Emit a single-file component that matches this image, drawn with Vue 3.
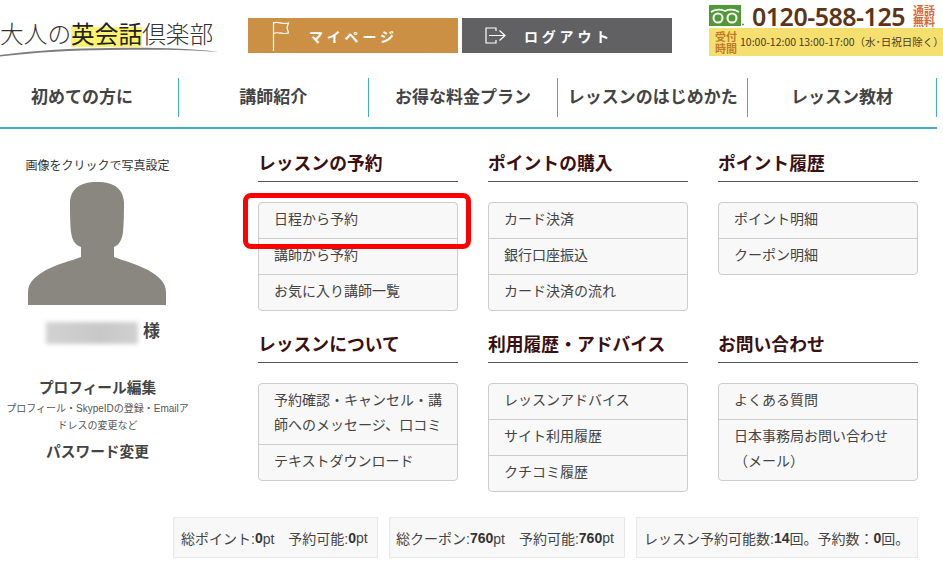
<template>
  <div class="page">
    <!-- header -->
    <header class="top">
      <div class="logo">
        <div class="logo-text">大人の<span class="mark">英会話</span>倶楽部</div>
        <svg class="brush" viewBox="0 0 218 12" width="218" height="12">
          <path d="M0 10 C40 5 70 3.500 110 3 C150 2.500 190 3 218 7 C190 4.500 150 4.500 110 5 C70 5.500 40 7 0 11.500 Z" fill="#7d7d7d" />
        </svg>
      </div>
      <a class="btn btn-my">
        <svg class="btn-icon" width="18" height="32" viewBox="0 0 18 32">
          <path d="M1.500 31 V2 M1.500 3 C6 0.500 10 5 16.500 3 L15 7.500 L16.500 13 C10 15 6 11 1.500 13.500" fill="none" stroke="#fff" stroke-width="1.200" />
        </svg>
        <span>マイページ</span>
      </a>
      <a class="btn btn-out">
        <svg class="btn-icon" width="21" height="17" viewBox="0 0 21 17">
          <path d="M11 4 V1 H1 V16 H11 V13 M4 8.500 H19.500 M14.500 3.500 L20 8.500 L14.500 13.500" fill="none" stroke="#fff" stroke-width="1.200" />
        </svg>
        <span>ログアウト</span>
      </a>
      <div class="tel">
        <div class="tel-row">
          <svg class="fd" width="36" height="21" viewBox="0 0 36 21">
            <rect width="32" height="21" fill="#4f9a35" />
            <circle cx="9" cy="13" r="4.500" fill="none" stroke="#fff" stroke-width="2" />
            <circle cx="23" cy="13" r="4.500" fill="none" stroke="#fff" stroke-width="2" />
            <path d="M2 7 Q9 3 16 6 Q23 3 30 7" fill="none" stroke="#fff" stroke-width="1.800" />
            <circle cx="34" cy="19.500" r="1" fill="#777" />
          </svg>
          <span class="tel-num">0120-588-125</span>
          <span class="tel-free">通話<br />無料</span>
        </div>
        <div class="hours">
          <span class="hours-label">受付<br />時間</span>
          <span class="hours-text">10:00-12:00 13:00-17:00（水･日祝日除く）</span>
        </div>
      </div>
    </header>

    <!-- global nav -->
    <nav class="gnav">
      <a v-for="item in navItems" :key="item" class="gnav-item">{{ item }}</a>
    </nav>

    <main class="content">
      <!-- profile column -->
      <aside class="side">
        <p class="photo-note">画像をクリックで写真設定</p>
        <svg class="avatar" width="138" height="123" viewBox="0 0 138 123">
          <path d="M0 123 V110 C0 100 8 94 18 88 C30 82 42 79 53 75 V65 C47 63 44 58 43 50 C42 40 42 28 42 20 C43 8 50 0 69 0 C88 0 95 8 96 20 C96 28 96 40 95 50 C94 58 91 63 86 65 V75 C97 79 108 82 120 88 C130 94 138 100 138 110 V123 Z" fill="#898780" />
        </svg>
        <div class="name"><span class="name-blur"></span><span class="name-sama">様</span></div>
        <a class="side-link side-first">プロフィール編集</a>
        <p class="side-sub">プロフィール・SkypeIDの登録・Emailアドレスの変更など</p>
        <a class="side-link">パスワード変更</a>
      </aside>

      <div class="body">
        <section class="menus">
          <div v-for="group in groups" :key="group.title" class="menu">
            <h2>{{ group.title }}</h2>
            <ul>
              <li v-for="link in group.links" :key="link">{{ link }}</li>
            </ul>
          </div>
          <!-- red annotation -->
          <div class="annot"></div>
        </section>

        <section class="stats">
          <div class="stat">総ポイント:<b>0</b>pt　予約可能:<b>0</b>pt</div>
          <div class="stat">総クーポン:<b>760</b>pt　予約可能:<b>760</b>pt</div>
          <div class="stat">レッスン予約可能数:<b>14</b>回。予約数：<b>0</b>回。</div>
        </section>
      </div>
    </main>
  </div>
</template>

<script setup>
const navItems = ['初めての方に', '講師紹介', 'お得な料金プラン', 'レッスンのはじめかた', 'レッスン教材']

const groups = [
  { title: 'レッスンの予約', links: ['日程から予約', '講師から予約', 'お気に入り講師一覧'] },
  { title: 'ポイントの購入', links: ['カード決済', '銀行口座振込', 'カード決済の流れ'] },
  { title: 'ポイント履歴', links: ['ポイント明細', 'クーポン明細'] },
  { title: 'レッスンについて', links: ['予約確認・キャンセル・講師へのメッセージ、口コミ', 'テキストダウンロード'] },
  { title: '利用履歴・アドバイス', links: ['レッスンアドバイス', 'サイト利用履歴', 'クチコミ履歴'] },
  { title: 'お問い合わせ', links: ['よくある質問', '日本事務局お問い合わせ（メール）'] },
]
</script>

<style>
html, body { margin: 0; background: #fff; overflow: hidden; }
</style>

<style scoped>
.page { width: 943px; height: 567px; overflow: hidden; font-family: "Liberation Sans", "Noto Sans CJK JP", sans-serif; color: #444; position: relative; }
.top { height: 78px; display: flex; align-items: flex-start; }
.logo { width: 248px; padding-top: 18px; flex-shrink: 0; }
.logo-text { font-family: "Noto Sans CJK JP", sans-serif; font-weight: 300; font-size: 23.700px; line-height: 30px; color: #333; white-space: nowrap; }
.mark { font-weight: 400; color: #222; background: linear-gradient(180deg, transparent 32%, #fbf36a 32%, #fbf36a 91%, transparent 91%); }
.brush { display: block; margin-top: -3px; }
.btn { width: 210px; height: 35px; margin-top: 18px; display: flex; align-items: center; color: #fff; font-size: 14px; font-weight: 700; letter-spacing: 3.800px; font-family: "Noto Sans CJK JP", sans-serif; }
.btn-my { background: #cb9044; padding-left: 24px; box-sizing: border-box; }
.btn-my .btn-icon { margin-right: 19px; }
.btn-out { background: #616163; margin-left: 4px; padding-left: 23px; box-sizing: border-box; }
.btn-out .btn-icon { margin-right: 18px; }
.tel { margin-left: 37px; width: 234px; flex-shrink: 0; padding-top: 3px; }
.tel-row { display: flex; align-items: center; height: 25px; }
.fd { flex-shrink: 0; }
.tel-num { font-family: "Noto Sans", sans-serif; font-weight: 600; font-size: 25px; line-height: 34px; letter-spacing: -0.500px; color: #5d3415; margin-left: 7px; white-space: nowrap; }
.tel-free { font-size: 11px; line-height: 11px; font-weight: 700; color: #d9683a; margin-left: 8px; font-family: "Noto Sans CJK JP", sans-serif; }
.hours { background: #f5e06f; height: 28px; display: flex; align-items: center; padding-left: 6px; white-space: nowrap; }
.hours-label { font-size: 11px; line-height: 12px; font-weight: 700; color: #c07a2b; font-family: "Noto Sans CJK JP", sans-serif; }
.hours-text { font-size: 10.500px; line-height: 12px; color: #4b3a20; margin-left: 3px; font-family: "Noto Sans CJK JP", sans-serif; }
.gnav { width: 937px; height: 49px; display: flex; border-bottom: 2px solid #41add2; }
.gnav-item { width: 190px; height: 39px; padding-bottom: 5px; display: flex; align-items: center; justify-content: center; font-size: 17px; font-weight: 700; color: #444; border-right: 1px solid #41add2; box-sizing: border-box; white-space: nowrap; }
.gnav-item:first-child { width: 179px; padding-right: 14px; }
.gnav-item:last-child { width: 189px; }
.content { display: flex; }
.side { width: 195px; margin-top: 29px; text-align: center; flex-shrink: 0; }
.photo-note { margin: 0 0 8px; font-size: 12px; line-height: 16px; color: #333; }
.avatar { display: block; margin-left: 28px; }
.name { display: flex; align-items: center; height: 22px; margin-top: 17px; margin-left: 46px; font-size: 17px; font-weight: 700; color: #444; }
.name-blur { width: 92px; height: 22px; margin-right: 5px; background: linear-gradient(90deg, #d2d2d2, #c8c8c8 60%, #d0d0d0); filter: blur(2px); }
.name-sama { margin-bottom: 7px; }
.side-link { display: block; font-size: 14.700px; line-height: 20px; font-weight: 700; color: #444; }
.side-first { margin-top: 34px; }
.side-sub { margin: 2px 0 8px; font-size: 10px; line-height: 17px; color: #555; padding: 0 5px; word-break: break-all; }
.body { margin-left: -22px; width: 745px; }
.menus { position: relative; margin-left: 85px; margin-top: 23px; display: grid; grid-template-columns: repeat(3, 200px); column-gap: 30px; row-gap: 22px; align-items: start; }
.menu h2 { margin: 0 0 20px; height: 29px; font-size: 17.800px; line-height: 24px; font-weight: 700; color: #3a1010; border-bottom: 1px solid #555; }
.menu ul { margin: 0; padding: 0; list-style: none; background: #f8f8f8; border: 1px solid #ccc; border-radius: 4px; }
.menu li { padding: 4px 15px 6px; font-size: 14px; line-height: 25px; color: #444; border-top: 1px solid #ccc; }
.menu li:first-child { border-top: 0; }
.annot { position: absolute; left: -15px; top: 41px; width: 218px; height: 46px; border: 5px solid #f00; border-radius: 8px; }
.stats { display: grid; grid-template-columns: 205px 236px 282px; gap: 11px; margin-top: 25px; }
.stat { height: 41px; display: flex; align-items: center; padding: 0 6px; box-sizing: border-box; background: #f8f8f8; border: 1px solid #e8e8e8; font-size: 14px; white-space: pre; color: #444; }
.stat:first-child { padding: 0 7px; }
.stat:last-child { padding: 0 7px; }
.stat b { color: #333; }
</style>
